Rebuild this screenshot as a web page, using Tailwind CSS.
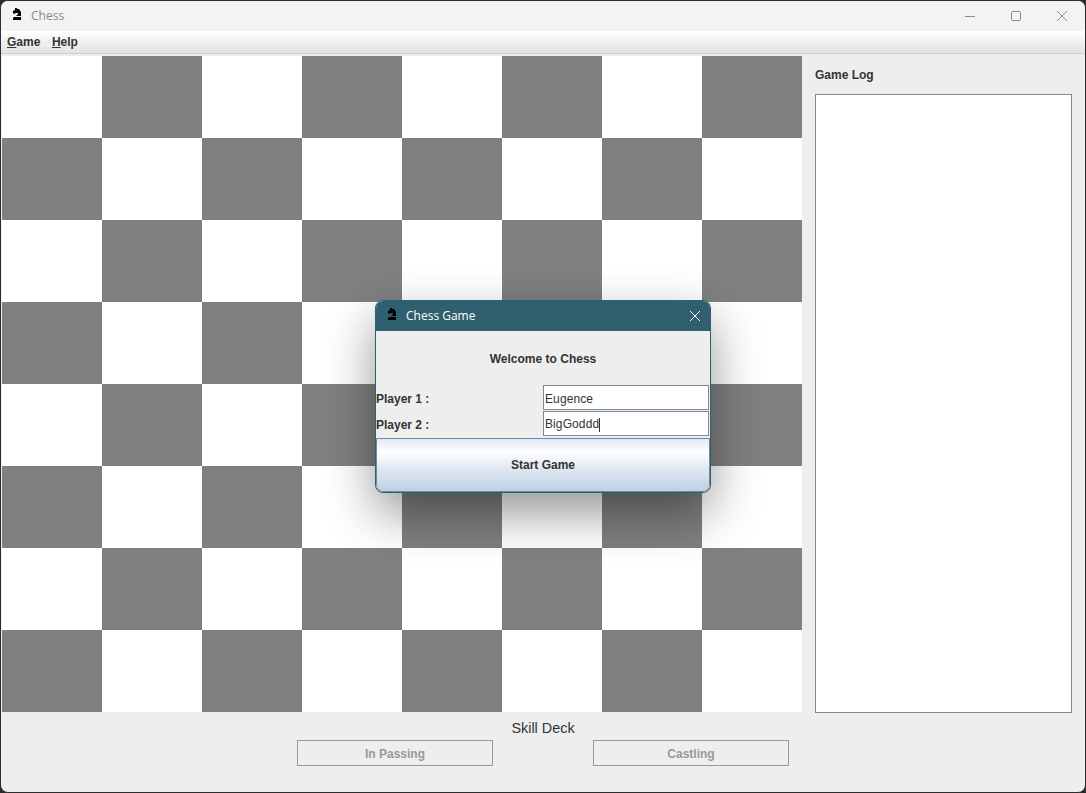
<!DOCTYPE html>
<html lang="en">
<head>
  <meta charset="UTF-8" />
  <title>Chess</title>
  <script src="https://cdn.jsdelivr.net/npm/@tailwindcss/browser@4"></script>
</head>
<body class="bg-[#2b2b2b] overflow-hidden">
  <div class="relative w-[1086px] h-[793px] bg-[#eeeeee] border border-[#2e2e2e] rounded-[8px] overflow-hidden font-['Liberation_Sans',sans-serif] text-[12px] text-[#333333] flex flex-col">

    <!-- title bar -->
    <div class="h-[30px] bg-[#f3f3f3] flex items-center shrink-0">
      <svg class="ml-[11px] mt-[-5px] w-[10px] h-[12px]" viewBox="0 0 10 12"><path d="M3 0 H5 V1 H7 L9 4 V8 H4 L6 6 V5 H4 L2 6 L1 5 V3 L3 2 Z M2 9 H9 V12 H1 V10 Z" fill="#000"/></svg>
      <span class="ml-[9px] font-['Open_Sans',sans-serif] text-[12px] text-[#8b8b8b]">Chess</span>
      <div class="ml-auto flex items-center">
        <svg class="w-[46px] h-[30px]" viewBox="0 0 46 30"><path d="M18 15.5 H28" stroke="#8a8a8a" fill="none"/></svg>
        <svg class="w-[46px] h-[30px]" viewBox="0 0 46 30"><rect x="18.5" y="10.5" width="9" height="9" rx="1" stroke="#8a8a8a" fill="none"/></svg>
        <svg class="w-[46px] h-[30px]" viewBox="0 0 46 30"><path d="M18 10 L28 20 M28 10 L18 20" stroke="#8a8a8a" fill="none"/></svg>
      </div>
    </div>

    <!-- menu bar -->
    <div class="h-[22px] bg-gradient-to-b from-white to-[#e2e2e2] flex items-center gap-[11.5px] pl-[6px] font-bold shrink-0">
      <span><span class="underline">G</span>ame</span>
      <span><span class="underline">H</span>elp</span>
    </div>
    <div class="h-[3px] border-t border-[#cfcfcf] shrink-0"></div>

    <div class="flex shrink-0">
      <!-- board -->
      <div class="ml-[1px] w-[800px] h-[656px] grid grid-cols-8 grid-rows-8">
        <div class="bg-white"></div><div class="bg-[#808080]"></div><div class="bg-white"></div><div class="bg-[#808080]"></div><div class="bg-white"></div><div class="bg-[#808080]"></div><div class="bg-white"></div><div class="bg-[#808080]"></div>
        <div class="bg-[#808080]"></div><div class="bg-white"></div><div class="bg-[#808080]"></div><div class="bg-white"></div><div class="bg-[#808080]"></div><div class="bg-white"></div><div class="bg-[#808080]"></div><div class="bg-white"></div>
        <div class="bg-white"></div><div class="bg-[#808080]"></div><div class="bg-white"></div><div class="bg-[#808080]"></div><div class="bg-white"></div><div class="bg-[#808080]"></div><div class="bg-white"></div><div class="bg-[#808080]"></div>
        <div class="bg-[#808080]"></div><div class="bg-white"></div><div class="bg-[#808080]"></div><div class="bg-white"></div><div class="bg-[#808080]"></div><div class="bg-white"></div><div class="bg-[#808080]"></div><div class="bg-white"></div>
        <div class="bg-white"></div><div class="bg-[#808080]"></div><div class="bg-white"></div><div class="bg-[#808080]"></div><div class="bg-white"></div><div class="bg-[#808080]"></div><div class="bg-white"></div><div class="bg-[#808080]"></div>
        <div class="bg-[#808080]"></div><div class="bg-white"></div><div class="bg-[#808080]"></div><div class="bg-white"></div><div class="bg-[#808080]"></div><div class="bg-white"></div><div class="bg-[#808080]"></div><div class="bg-white"></div>
        <div class="bg-white"></div><div class="bg-[#808080]"></div><div class="bg-white"></div><div class="bg-[#808080]"></div><div class="bg-white"></div><div class="bg-[#808080]"></div><div class="bg-white"></div><div class="bg-[#808080]"></div>
        <div class="bg-[#808080]"></div><div class="bg-white"></div><div class="bg-[#808080]"></div><div class="bg-white"></div><div class="bg-[#808080]"></div><div class="bg-white"></div><div class="bg-[#808080]"></div><div class="bg-white"></div>
      </div>

      <!-- game log -->
      <div class="ml-[13px] w-[257px] flex flex-col">
        <div class="h-[38px] pt-[12px] font-bold leading-[14px]">Game Log</div>
        <div class="h-[619px] w-[257px] bg-white border border-[#7a8a99]"></div>
      </div>
    </div>

    <!-- skill deck -->
    <div class="w-[1084px] flex flex-col items-center">
      <div class="mt-[7px] text-[14.4px] leading-[16px]">Skill Deck</div>
      <div class="mt-[4px] flex gap-[100px]">
        <button class="w-[196px] h-[26px] pt-[1px] border border-[#999999] font-bold text-[#999999]">In Passing</button>
        <button class="w-[196px] h-[26px] pt-[1px] border border-[#999999] font-bold text-[#999999]">Castling</button>
      </div>
    </div>

    <!-- start dialog -->
    <div class="absolute left-[374px] top-[299px] w-[336px] h-[193px] rounded-[8px] border border-[#2f6070] bg-[#eeeeee] overflow-hidden flex flex-col shadow-[0_20px_50px_rgba(0,0,0,0.42)]">
      <div class="h-[30px] bg-[#30606f] flex items-center shrink-0 text-white">
        <svg class="ml-[11px] mt-[-4px] w-[10px] h-[12px]" viewBox="0 0 10 12"><path d="M3 0 H5 V1 H7 L9 4 V8 H4 L6 6 V5 H4 L2 6 L1 5 V3 L3 2 Z M2 9 H9 V12 H1 V10 Z" fill="#000"/></svg>
        <span class="ml-[9px] font-['Open_Sans',sans-serif] text-[12px]">Chess Game</span>
        <svg class="ml-auto mr-[9px] w-[12px] h-[12px]" viewBox="0 0 12 12"><path d="M1 1 L11 11 M11 1 L1 11" stroke="#fff" fill="none"/></svg>
      </div>
      <div class="h-[54px] pt-[1px] flex items-center justify-center font-bold shrink-0">Welcome to Chess</div>
      <div class="h-[26px] flex items-start font-bold shrink-0">
        <span class="leading-[29px]">Player 1 :</span>
        <div class="ml-auto mr-[1px] w-[166px] h-[25px] bg-white border border-[#7a8a99] pl-[1px] leading-[27px] tracking-[0.1px] font-normal">Eugence</div>
      </div>
      <div class="h-[26px] flex items-start font-bold shrink-0">
        <span class="leading-[29px]">Player 2 :</span>
        <div class="ml-auto mr-[1px] w-[166px] h-[25px] bg-white border border-[#7a8a99] pl-[1px] pt-[2px] leading-[25px] tracking-[0.1px] font-normal flex items-center">BigGoddd<span class="w-[1px] h-[14px] bg-[#333333]"></span></div>
      </div>
      <button class="mt-[1px] h-[54px] shrink-0 border border-[#6f8a9c] rounded-b-[7px] bg-[linear-gradient(#dfe9f4,#ffffff_25%,#dce6f1_60%,#bfd1e3)] font-bold">Start Game</button>
    </div>
  </div>
</body>
</html>
